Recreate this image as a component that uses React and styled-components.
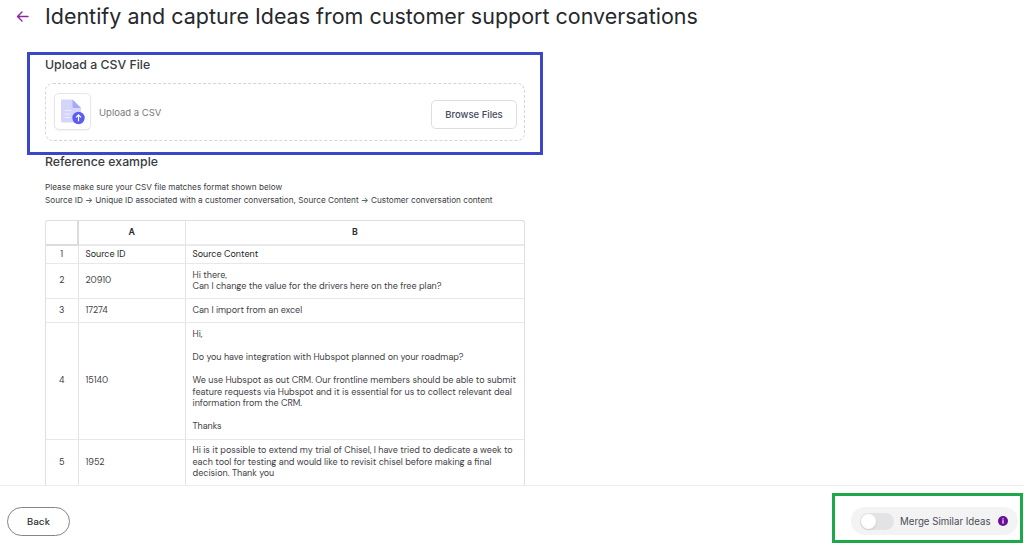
import styled, { createGlobalStyle } from "styled-components";

const GlobalStyle = createGlobalStyle`
    html, body {
        margin: 0;
        padding: 0;
        background: #fff;
    }
    body {
        font-family: Inter, "Liberation Sans", sans-serif;
        color: #25272d;
    }
`;

const Page = styled.div`
    width: 1024px;
    height: 547px;
    display: flex;
    flex-direction: column;
    overflow: hidden;
`;

const Header = styled.header`
    box-sizing: border-box;
    height: 35px;
    flex: none;
    display: flex;
    align-items: center;
    padding: 0 0 3px 16px;
    gap: 16px;
`;

const BackArrow = styled.svg`
    width: 13px;
    height: 13px;
    flex: none;
    color: #8e24aa;
`;

const Title = styled.h1`
    margin: 0;
    font-size: 21.47px;
    font-weight: 400;
    white-space: nowrap;
    color: #26282d;
`;

const Main = styled.main`
    flex: 1;
    min-height: 0;
    overflow: hidden;
    padding: 17px 0 0 27px;
`;

const Highlight = styled.section`
    box-sizing: border-box;
    width: 516px;
    height: 103px;
    border: 3px solid #3b47c9;
    padding: 0 15px;
`;

const SectionTitle = styled.h2`
    margin: 0;
    font-size: 12.3px;
    line-height: 18px;
    font-weight: 500;
    color: #3a3c42;
`;

const UploadTitle = styled(SectionTitle)`
    margin-top: 1px;
`;

const DropZone = styled.div`
    box-sizing: border-box;
    width: 480px;
    height: 58px;
    margin-top: 9px;
    border: 1px dashed #d4d5d9;
    border-radius: 8px;
    display: flex;
    align-items: center;
    padding: 0 7px 0 8px;
`;

const FileIcon = styled.div`
    box-sizing: border-box;
    width: 37px;
    height: 37px;
    flex: none;
    position: relative;
    top: -1px;
    border: 1px solid #e6e6ea;
    border-radius: 5px;
    box-shadow: 0 1px 2px rgba(0, 0, 0, 0.06);
    display: flex;
    align-items: center;
    justify-content: center;
`;

const UploadLabel = styled.span`
    margin-left: 8px;
    font-size: 9.5px;
    color: #777a82;
`;

const BrowseButton = styled.button`
    box-sizing: border-box;
    margin-left: auto;
    width: 86px;
    height: 29px;
    position: relative;
    top: 2px;
    background: #fff;
    border: 1px solid #dcdee4;
    border-radius: 5px;
    font-family: inherit;
    font-size: 9.5px;
    font-weight: 500;
    color: #454a5c;
`;

const ReferenceTitle = styled(SectionTitle)`
    margin: -2px 0 0 18px;
`;

const Hint = styled.p`
    margin: 10px 0 0 18px;
    font-size: 8.2px;
    line-height: 13px;
    color: #3c3e44;
`;

const SheetWrap = styled.div`
    box-sizing: border-box;
    width: 480px;
    margin: 13px 0 0 18px;
    border: 1px solid #dedfe2;
    border-bottom: 0;
    border-radius: 3px 3px 0 0;
    overflow: hidden;
`;

const Sheet = styled.table`
    width: 100%;
    border-collapse: collapse;
    table-layout: fixed;
    font-family: "DM Sans", Lato, Inter, sans-serif;
    font-size: 9px;
    line-height: 11.5px;
    color: #3a3c42;
`;

const CornerCol = styled.col`
    width: 32px;
`;

const IdCol = styled.col`
    width: 107px;
`;

const ColHead = styled.th`
    height: 23px;
    padding: 0;
    font-size: 9px;
    font-weight: 700;
    color: #2b2d33;
    text-align: center;
    border-bottom: 2px solid #eaeaec;
    border-left: 1px solid #e4e4e6;

    &:first-child {
        border-left: 0;
        border-right: 2px solid #dcdcde;
        border-bottom-color: #dcdcde;
    }
`;

const Row = styled.tr`
    height: ${(props) => props.$height}px;
`;

const Cell = styled.td`
    padding: 1px 7px 0;
    border-bottom: 1px solid #e8e8ea;
    border-left: 1px solid #e4e4e6;
    vertical-align: middle;
    white-space: pre-line;
    color: ${(props) => (props.$strong ? "#1d1f24" : "#3f4147")};
`;

const RowNumber = styled.td`
    padding: 1px 0 0;
    text-align: center;
    border-bottom: 1px solid #e8e8ea;
    border-right: 1px solid #e4e4e6;
`;

const Footer = styled.footer`
    box-sizing: border-box;
    height: 62px;
    flex: none;
    border-top: 1px solid #ececee;
    display: flex;
    align-items: flex-start;
    justify-content: space-between;
    padding: 0 1px 0 7px;
`;

const BackButton = styled.button`
    box-sizing: border-box;
    width: 63px;
    height: 29px;
    margin-top: 21px;
    background: #fff;
    border: 1px solid #83858b;
    border-radius: 15px;
    font-family: "DM Sans", Lato, Inter, sans-serif;
    font-size: 10px;
    font-weight: 500;
    color: #2b2d33;
`;

const MergeBox = styled.div`
    box-sizing: border-box;
    width: 191px;
    height: 50px;
    margin-top: 7px;
    border: 3px solid #1fa84a;
    display: flex;
    align-items: center;
    justify-content: flex-end;
    padding: 6px 2px 0 0;
`;

const MergePill = styled.div`
    box-sizing: border-box;
    width: 167px;
    height: 28px;
    background: #f3f3f4;
    border-radius: 14px;
    display: flex;
    align-items: center;
    padding-left: 9px;
`;

const Switch = styled.span`
    box-sizing: border-box;
    width: 34px;
    height: 17px;
    flex: none;
    background: #e3e3e5;
    border-radius: 9px;
    padding: 1px;
    display: flex;
`;

const Knob = styled.span`
    width: 15px;
    height: 15px;
    background: #fff;
    border-radius: 50%;
    box-shadow: 0 1px 2px rgba(0, 0, 0, 0.12);
`;

const MergeLabel = styled.span`
    margin-left: 6px;
    font-size: 9.7px;
    color: #4a4d57;
    white-space: nowrap;
`;

const InfoIcon = styled.svg`
    width: 10px;
    height: 10px;
    margin-left: 7px;
    flex: none;
`;

const rows = [
    { num: "1", height: 18, id: "Source ID", content: "Source Content", strong: true },
    { num: "2", height: 35, id: "20910", content: "Hi there,\nCan I change the value for the drivers here on the free plan?" },
    { num: "3", height: 24, id: "17274", content: "Can I import from an excel" },
    {
        num: "4",
        height: 117,
        id: "15140",
        content:
            "Hi,\n\nDo you have integration with Hubspot planned on your roadmap?\n\nWe use Hubspot as out CRM. Our frontline members should be able to submit\nfeature requests via Hubspot and it is essential for us to collect relevant deal\ninformation from the CRM.\n\nThanks",
    },
    {
        num: "5",
        height: 46,
        id: "1952",
        content:
            "Hi is it possible to extend my trial of Chisel, I have tried to dedicate a week to\neach tool for testing and would like to revisit chisel before making a final\ndecision. Thank you",
    },
];

function App() {
    return (
        <Page>
            <GlobalStyle />
            <Header>
                <BackArrow viewBox="0 0 13 13" fill="none" stroke="currentColor" strokeWidth="1.4" strokeLinecap="round" strokeLinejoin="round">
                    <path d="M12 6.5H1.5M6 2L1.5 6.5L6 11" />
                </BackArrow>
                <Title>Identify and capture Ideas from customer support conversations</Title>
            </Header>
            <Main>
                <Highlight>
                    <UploadTitle>Upload a CSV File</UploadTitle>
                    <DropZone>
                        <FileIcon>
                            <svg width="27" height="27" viewBox="0 0 27 27">
                                <path d="M2 1.5H13.5L22 10V23a1.5 1.5 0 0 1-1.5 1.5H3.5A1.5 1.5 0 0 1 2 23Z" fill="#d5d5fb" />
                                <path d="M13.5 1.5L22 10H15a1.5 1.5 0 0 1-1.5-1.5Z" fill="#a9a8f6" />
                                <path d="M5.5 12.5H12M5.5 16H11M5.5 19.5H11" stroke="#eeeefe" strokeWidth="1.2" />
                                <circle cx="19.5" cy="20" r="6.2" fill="#5b5df0" />
                                <path d="M19.5 23.2V17M17 19.3L19.5 16.8L22 19.3" fill="none" stroke="#fff" strokeWidth="1.2" />
                            </svg>
                        </FileIcon>
                        <UploadLabel>Upload a CSV</UploadLabel>
                        <BrowseButton>Browse Files</BrowseButton>
                    </DropZone>
                </Highlight>
                <ReferenceTitle as="h2">Reference example</ReferenceTitle>
                <Hint>
                    Please make sure your CSV file matches format shown below
                    <br />
                    Source ID → Unique ID associated with a customer conversation, Source Content → Customer conversation content
                </Hint>
                <SheetWrap>
                    <Sheet>
                        <colgroup>
                            <CornerCol />
                            <IdCol />
                            <col />
                        </colgroup>
                        <thead>
                            <tr>
                                <ColHead />
                                <ColHead>A</ColHead>
                                <ColHead>B</ColHead>
                            </tr>
                        </thead>
                        <tbody>
                            {rows.map((row) => (
                                <Row key={row.num} $height={row.height}>
                                    <RowNumber>{row.num}</RowNumber>
                                    <Cell $strong={row.strong}>{row.id}</Cell>
                                    <Cell $strong={row.strong}>{row.content}</Cell>
                                </Row>
                            ))}
                        </tbody>
                    </Sheet>
                </SheetWrap>
            </Main>
            <Footer>
                <BackButton>Back</BackButton>
                <MergeBox>
                    <MergePill>
                        <Switch>
                            <Knob />
                        </Switch>
                        <MergeLabel>Merge Similar Ideas</MergeLabel>
                        <InfoIcon viewBox="0 0 10 10">
                            <circle cx="5" cy="5" r="5" fill="#6a0f9c" />
                            <rect x="4.4" y="4.2" width="1.2" height="3.4" fill="#fff" />
                            <rect x="4.4" y="2.3" width="1.2" height="1.2" fill="#fff" />
                        </InfoIcon>
                    </MergePill>
                </MergeBox>
            </Footer>
        </Page>
    );
}

export default App;
